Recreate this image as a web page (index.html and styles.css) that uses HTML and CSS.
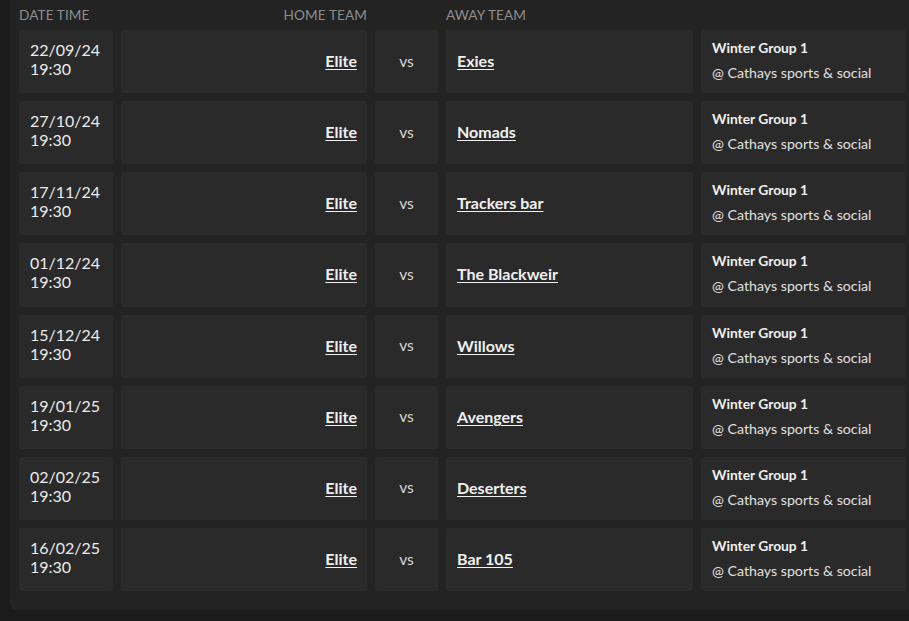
FILE: index.html
```html
<!DOCTYPE html>
<html lang="en">
<head>
<meta charset="utf-8">
<title>Fixtures</title>
<link rel="stylesheet" href="styles.css">
</head>
<body>
<div class="panel">
  <div class="grid head">
    <div class="h">Date Time</div>
    <div class="h right">Home Team</div>
    <div class="h"></div>
    <div class="h">Away Team</div>
    <div class="h"></div>
  </div>
  <div class="grid row">
    <div class="cell date">22/09/24<br>19:30</div>
    <div class="cell home"><a href="#">Elite</a></div>
    <div class="cell vs">vs</div>
    <div class="cell away"><a href="#">Exies</a></div>
    <div class="cell info"><div class="grp">Winter Group 1</div><div class="venue">@ Cathays sports &amp; social</div></div>
  </div>
  <div class="grid row">
    <div class="cell date">27/10/24<br>19:30</div>
    <div class="cell home"><a href="#">Elite</a></div>
    <div class="cell vs">vs</div>
    <div class="cell away"><a href="#">Nomads</a></div>
    <div class="cell info"><div class="grp">Winter Group 1</div><div class="venue">@ Cathays sports &amp; social</div></div>
  </div>
  <div class="grid row">
    <div class="cell date">17/11/24<br>19:30</div>
    <div class="cell home"><a href="#">Elite</a></div>
    <div class="cell vs">vs</div>
    <div class="cell away"><a href="#">Trackers bar</a></div>
    <div class="cell info"><div class="grp">Winter Group 1</div><div class="venue">@ Cathays sports &amp; social</div></div>
  </div>
  <div class="grid row">
    <div class="cell date">01/12/24<br>19:30</div>
    <div class="cell home"><a href="#">Elite</a></div>
    <div class="cell vs">vs</div>
    <div class="cell away"><a href="#">The Blackweir</a></div>
    <div class="cell info"><div class="grp">Winter Group 1</div><div class="venue">@ Cathays sports &amp; social</div></div>
  </div>
  <div class="grid row">
    <div class="cell date">15/12/24<br>19:30</div>
    <div class="cell home"><a href="#">Elite</a></div>
    <div class="cell vs">vs</div>
    <div class="cell away"><a href="#">Willows</a></div>
    <div class="cell info"><div class="grp">Winter Group 1</div><div class="venue">@ Cathays sports &amp; social</div></div>
  </div>
  <div class="grid row">
    <div class="cell date">19/01/25<br>19:30</div>
    <div class="cell home"><a href="#">Elite</a></div>
    <div class="cell vs">vs</div>
    <div class="cell away"><a href="#">Avengers</a></div>
    <div class="cell info"><div class="grp">Winter Group 1</div><div class="venue">@ Cathays sports &amp; social</div></div>
  </div>
  <div class="grid row">
    <div class="cell date">02/02/25<br>19:30</div>
    <div class="cell home"><a href="#">Elite</a></div>
    <div class="cell vs">vs</div>
    <div class="cell away"><a href="#">Deserters</a></div>
    <div class="cell info"><div class="grp">Winter Group 1</div><div class="venue">@ Cathays sports &amp; social</div></div>
  </div>
  <div class="grid row">
    <div class="cell date">16/02/25<br>19:30</div>
    <div class="cell home"><a href="#">Elite</a></div>
    <div class="cell vs">vs</div>
    <div class="cell away"><a href="#">Bar 105</a></div>
    <div class="cell info"><div class="grp">Winter Group 1</div><div class="venue">@ Cathays sports &amp; social</div></div>
  </div>
</div>
</body>
</html>
```
FILE: styles.css
```css
html, body {
  margin: 0;
  padding: 0;
  background: #1b1b1b;
  height: 100%;
  overflow: hidden;
}
body {
  font-family: "Lato", "Open Sans", sans-serif;
  color: #e6e6e6;
}
.panel {
  margin: -10px 0 0 10px;
  width: 960px;
  background: #232323;
  border-radius: 0 0 0 7px;
  padding: 10px 0 19px 9px;
}
.grid {
  display: grid;
  grid-template-columns: 94px 246px 63px 247px 205px;
  column-gap: 8px;
}
.head {
  height: 30px;
  align-items: center;
}
.h {
  font-size: 13.6px;
  text-transform: uppercase;
  color: #8d8d8d;
  letter-spacing: 0.1px;
  padding-bottom: 1px;
}
.h.right { text-align: right; }
.row {
  height: 63.15px;
  margin-bottom: 8px;
}
.row:last-child { margin-bottom: 0; }
.cell {
  background: #2a2a2a;
  border-radius: 2px;
  display: flex;
  flex-direction: column;
  justify-content: center;
}
.date {
  font-size: 16px;
  line-height: 19px;
  padding-left: 11px;
  color: #ececec;
  padding-bottom: 5px;
}
.home {
  align-items: flex-end;
  padding-right: 10px;
  padding-bottom: 2px;
}
.away {
  padding-left: 11px;
  padding-bottom: 2px;
}
.cell a {
  color: #f0f0f0;
  font-weight: 700;
  font-size: 16px;
  text-decoration: underline;
  text-underline-offset: 2px;
}
.vs {
  align-items: center;
  font-size: 15.5px;
  color: #d8d8d8;
  padding-bottom: 2px;
}
.info {
  padding-left: 11px;
  justify-content: flex-start;
  padding-top: 9px;
}
.grp {
  font-size: 13.8px;
  font-weight: 700;
  color: #f0f0f0;
  line-height: 17px;
}
.venue {
  font-size: 14.2px;
  color: #e0e0e0;
  line-height: 17px;
  margin-top: 8px;
}
```
